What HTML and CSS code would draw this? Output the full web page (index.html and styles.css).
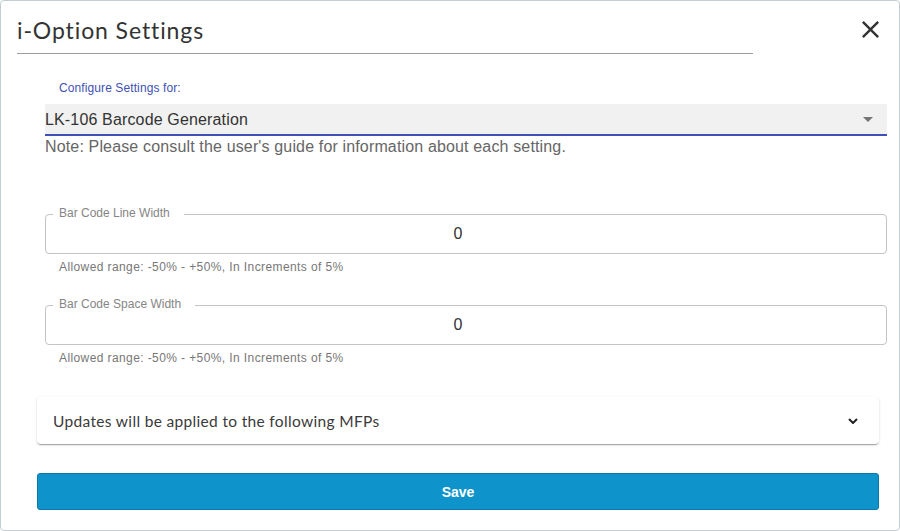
FILE: index.html
```html
<!DOCTYPE html>
<html lang="en">
<head>
<meta charset="utf-8">
<title>i-Option Settings</title>
<link rel="stylesheet" href="styles.css">
</head>
<body>
<div class="dialog">
  <div class="dialog-header">
    <h1 class="dialog-title">i-Option Settings</h1>
    <button class="close-btn" aria-label="Close">
      <svg width="17" height="17" viewBox="5 5 14 14"><path d="M19 6.41L17.59 5 12 10.59 6.41 5 5 6.41 10.59 12 5 17.59 6.41 19 12 13.41 17.59 19 19 17.59 13.41 12z" fill="#333"/></svg>
    </button>
  </div>
  <div class="dialog-body">
    <div class="form">
      <div class="select-label">Configure Settings for:</div>
      <div class="select">
        <span class="select-value">LK-106 Barcode Generation</span>
        <svg class="select-arrow" width="10" height="5" viewBox="0 0 10 5"><path d="M0 0h10L5 5z" fill="#757575"/></svg>
      </div>
      <div class="note">Note: Please consult the user's guide for information about each setting.</div>

      <div class="field field-first">
        <span class="field-legend">Bar Code Line Width</span>
        <div class="field-input">0</div>
      </div>
      <div class="hint">Allowed range: -50% - +50%, In Increments of 5%</div>

      <div class="field">
        <span class="field-legend">Bar Code Space Width</span>
        <div class="field-input">0</div>
      </div>
      <div class="hint">Allowed range: -50% - +50%, In Increments of 5%</div>
    </div>

    <div class="accordion">
      <span class="accordion-title">Updates will be applied to the following MFPs</span>
      <svg class="accordion-chevron" width="10" height="6" viewBox="0 0 10 6"><polyline points="1,1 5,5 9,1" fill="none" stroke="#222" stroke-width="2"/></svg>
    </div>

    <button class="save-btn">Save</button>
  </div>
</div>
</body>
</html>
```

FILE: styles.css
```css
html, body {
  margin: 0;
  padding: 0;
  background: #fff;
}

.dialog {
  box-sizing: border-box;
  width: 900px;
  height: 531px;
  border: 1px solid #c3cdd2;
  border-radius: 4px;
  background: #fff;
  font-family: "Liberation Sans", Arial, sans-serif;
  color: #333;
}

.dialog-header {
  display: flex;
  align-items: flex-start;
  padding-left: 16px;
}

.dialog-title {
  margin: 0;
  width: 736px;
  padding: 17px 0 11px 0;
  border-bottom: 1px solid #9c9c9c;
  font-family: Lato, "Open Sans", sans-serif;
  font-weight: 400;
  font-size: 23px;
  line-height: 24px;
  letter-spacing: 0.9px;
  color: #333;
}

.close-btn {
  margin: 20px 20px 0 auto;
  padding: 0;
  border: 0;
  background: none;
  width: 17px;
  height: 17px;
  display: flex;
  cursor: pointer;
}

.dialog-body {
  padding: 0 20px 0 36px;
}

.form {
  margin: 0 -8px 0 8px;
}

.select-label {
  margin-top: 27px;
  padding-left: 14px;
  font-size: 12px;
  line-height: 14px;
  letter-spacing: 0.1px;
  color: #3f51b5;
}

.select {
  margin-top: 9px;
  padding-top: 1px;
  box-sizing: content-box;
  height: 29px;
  background: #f1f1f1;
  border-bottom: 2px solid #3f51b5;
  display: flex;
  align-items: center;
  justify-content: space-between;
  padding-right: 14px;
}

.select-value {
  font-size: 16px;
  line-height: 18px;
  letter-spacing: 0.15px;
  color: #333;
}

.select-arrow {
  display: block;
}

.note {
  margin-top: 2px;
  font-size: 16px;
  line-height: 18px;
  letter-spacing: 0.15px;
  color: #666;
}

.field {
  position: relative;
  box-sizing: border-box;
  height: 40px;
  margin-top: 32px;
  border: 1px solid #c4c4c4;
  border-radius: 4px;
}

.field-first {
  margin-top: 58px;
}

.field-legend {
  position: absolute;
  top: -9px;
  left: 7px;
  padding: 0 14px 0 6px;
  background: #fff;
  font-size: 12px;
  line-height: 14px;
  color: #858585;
}

.field-input {
  height: 38px;
  line-height: 38px;
  padding-right: 16px;
  text-align: center;
  font-size: 16px;
  color: #333;
}

.hint {
  margin-top: 6px;
  padding-left: 14px;
  font-size: 12px;
  line-height: 14px;
  letter-spacing: 0.4px;
  color: #777;
}

.field + .hint + .field {
  margin-top: 31px;
}

.accordion {
  margin-top: 32px;
  height: 47px;
  box-sizing: border-box;
  padding: 0 21px 0 16px;
  display: flex;
  align-items: center;
  justify-content: space-between;
  background: #fff;
  border-radius: 4px;
  box-shadow: 0 2px 1px -1px rgba(0,0,0,.2), 0 1px 1px 0 rgba(0,0,0,.14), 0 1px 3px 0 rgba(0,0,0,.12);
}

.accordion-title {
  font-family: Lato, "Open Sans", sans-serif;
  font-size: 15.5px;
  letter-spacing: 0.33px;
  color: #3a3a3a;
}

.accordion-chevron {
  display: block;
}

.save-btn {
  display: block;
  width: 100%;
  margin-top: 29px;
  height: 37px;
  border: 1px solid #0b79a8;
  border-radius: 3px;
  background: #0e94ca;
  color: #fff;
  font-family: "Liberation Sans", Arial, sans-serif;
  font-weight: 700;
  font-size: 14px;
  cursor: pointer;
}
```
